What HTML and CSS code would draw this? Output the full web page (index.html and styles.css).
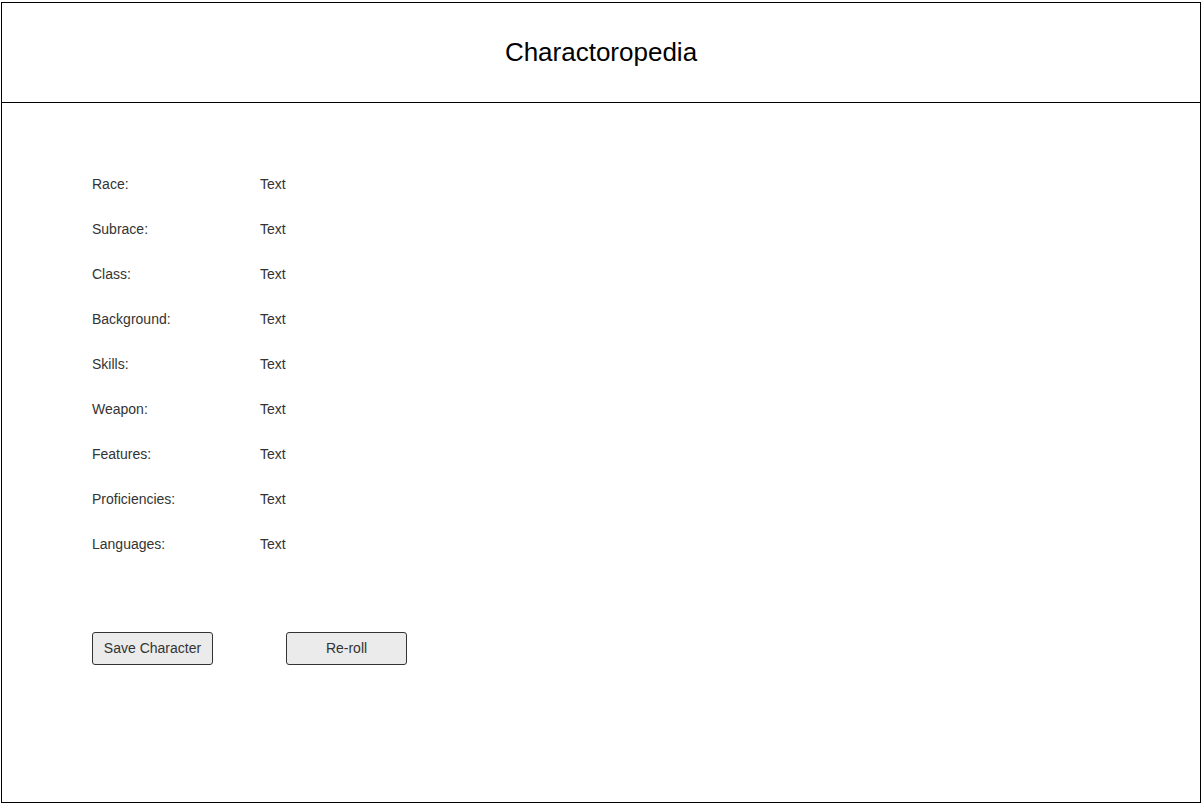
FILE: index.html
```html
<!DOCTYPE html>
<html>
<head>
<meta charset="utf-8">
<title>Charactoropedia</title>
<link rel="stylesheet" href="styles.css">
</head>
<body>
<div class="frame">
  <header class="header">
    <h1 class="title">Charactoropedia</h1>
  </header>
  <main class="content">
    <div class="rows">
      <div class="row"><span class="label">Race:</span><span class="value">Text</span></div>
      <div class="row"><span class="label">Subrace:</span><span class="value">Text</span></div>
      <div class="row"><span class="label">Class:</span><span class="value">Text</span></div>
      <div class="row"><span class="label">Background:</span><span class="value">Text</span></div>
      <div class="row"><span class="label">Skills:</span><span class="value">Text</span></div>
      <div class="row"><span class="label">Weapon:</span><span class="value">Text</span></div>
      <div class="row"><span class="label">Features:</span><span class="value">Text</span></div>
      <div class="row"><span class="label">Proficiencies:</span><span class="value">Text</span></div>
      <div class="row"><span class="label">Languages:</span><span class="value">Text</span></div>
    </div>
    <div class="actions">
      <button class="btn">Save Character</button>
      <button class="btn">Re-roll</button>
    </div>
  </main>
</div>
</body>
</html>
```
FILE: styles.css
```css
html, body {
  margin: 0;
  padding: 0;
  background: #ffffff;
}
body {
  font-family: "Liberation Sans", Arial, sans-serif;
}
.frame {
  box-sizing: border-box;
  margin: 2px 0 0 1px;
  width: 1200px;
  height: 801px;
  border: 1px solid #000;
  display: flex;
  flex-direction: column;
}
.header {
  box-sizing: border-box;
  height: 100px;
  padding-bottom: 1px;
  border-bottom: 1px solid #000;
  display: flex;
  align-items: center;
  justify-content: center;
}
.title {
  margin: 0;
  font-weight: normal;
  font-size: 26px;
  color: #000;
}
.content {
  padding: 58px 0 0 90px;
}
.row {
  height: 45px;
  display: flex;
  align-items: center;
  font-size: 14px;
  color: #333;
}
.label {
  width: 168px;
}
.actions {
  margin-top: 66px;
  display: flex;
  gap: 73px;
}
.btn {
  box-sizing: border-box;
  width: 121px;
  height: 33px;
  border: 1px solid #333;
  border-radius: 3px;
  background: #ebebeb;
  font-family: "Liberation Sans", Arial, sans-serif;
  font-size: 14px;
  color: #333;
  padding: 0 0 2px 0;
}
```
